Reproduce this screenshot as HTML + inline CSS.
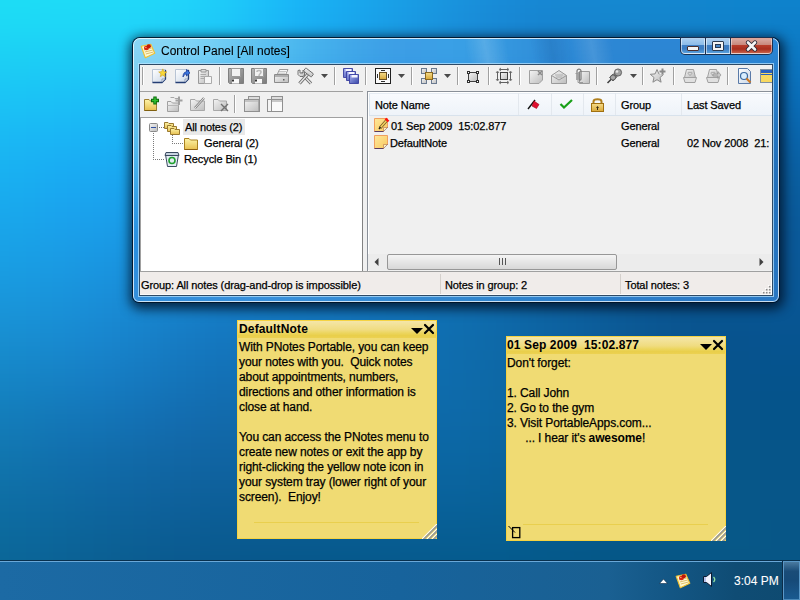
<!DOCTYPE html>
<html><head><meta charset="utf-8">
<style>
*{box-sizing:border-box;margin:0;padding:0}
html,body{width:800px;height:600px;overflow:hidden}
body{position:relative;font-family:"Liberation Sans",sans-serif;font-size:12px;color:#000;background:#1580c8}
#bg{position:absolute;left:0;top:0;width:800px;height:600px;filter:blur(16px)}
#bg i{position:absolute;width:40px;height:40px}
.a{position:absolute}
.t{position:absolute;white-space:pre;line-height:15px;-webkit-text-stroke:0.25px currentColor}
.note .t{letter-spacing:-0.1px}
svg{position:absolute;overflow:visible}
/* window */
#win{left:133px;top:38px;width:646px;height:264px;border-radius:7px 7px 6px 6px;overflow:hidden;background:#3a90d8;
 box-shadow:0 0 0 1px rgba(0,20,40,0.9), 1px 3px 12px 4px rgba(0,15,35,0.8);}
#fbg{position:absolute;left:0;top:0;width:646px;height:264px;filter:blur(6px)}
#fbg i{position:absolute;width:16px;height:16px}
#winin{left:0;top:0;right:0;bottom:0;border-radius:7px 7px 6px 6px;border:1px solid rgba(255,255,255,0.75);}
#title{left:28px;top:6px;font-size:12px;color:#000;-webkit-text-stroke:0.1px #000}
#client{left:139px;top:64px;width:634px;height:232px;background:#f0f0f0;border:1px solid #2e4a66;box-shadow:0 0 0 1px rgba(190,230,255,0.7);}
.sep{position:absolute;width:2px;border-left:1px solid #a0a0a0;border-right:1px solid #fff;height:18px}
.hdrsep{position:absolute;top:93px;width:1px;height:22px;background:#e3e8ee}
.ui{font-size:11px;letter-spacing:-0.1px}
/* notes */
.note{position:absolute;background:#f0db73;border:1px solid #f5d342}
.ncap{position:absolute;left:0;top:0;right:0;height:17px;background:linear-gradient(#f4e6a8,#f0dc80 52%,#ecd660 70%,#e9cf4a 86%,#ecd152);}
b,.bold{-webkit-text-stroke:0}
.nline{position:absolute;height:1px;background:#e9cf4e}
#task{left:0;top:560px;width:800px;height:40px;background:linear-gradient(90deg,#1c6aa4 0%,#17639c 50%,#1a6092 76%,#135684 84%,#0f4c74 92%,#0e4a70 100%);border-top:1px solid #08304e}
#task:before{content:"";position:absolute;left:0;top:0;width:800px;height:1px;background:#6aa8d8}
</style></head>
<body>
<div id="bg"><i style="left:-80px;top:-80px;background:#1ee0f5"></i><i style="left:-40px;top:-80px;background:#1ee0f5"></i><i style="left:0px;top:-80px;background:#1edff5"></i><i style="left:40px;top:-80px;background:#1fdef7"></i><i style="left:80px;top:-80px;background:#20dcf9"></i><i style="left:120px;top:-80px;background:#20dafa"></i><i style="left:160px;top:-80px;background:#20d7fb"></i><i style="left:200px;top:-80px;background:#1fcffa"></i><i style="left:240px;top:-80px;background:#1cc3fa"></i><i style="left:280px;top:-80px;background:#1ab7f7"></i><i style="left:320px;top:-80px;background:#1aaef2"></i><i style="left:360px;top:-80px;background:#1aa5eb"></i><i style="left:400px;top:-80px;background:#1a9de4"></i><i style="left:440px;top:-80px;background:#1994de"></i><i style="left:480px;top:-80px;background:#188dd9"></i><i style="left:520px;top:-80px;background:#188ad5"></i><i style="left:560px;top:-80px;background:#178ad3"></i><i style="left:600px;top:-80px;background:#168ad2"></i><i style="left:640px;top:-80px;background:#148ad1"></i><i style="left:680px;top:-80px;background:#1288d0"></i><i style="left:720px;top:-80px;background:#1087d0"></i><i style="left:760px;top:-80px;background:#0e85cf"></i><i style="left:800px;top:-80px;background:#0d84cf"></i><i style="left:840px;top:-80px;background:#0d84cf"></i><i style="left:-80px;top:-40px;background:#1ee0f5"></i><i style="left:-40px;top:-40px;background:#1ee0f5"></i><i style="left:0px;top:-40px;background:#1edff5"></i><i style="left:40px;top:-40px;background:#1fdef7"></i><i style="left:80px;top:-40px;background:#20dcf9"></i><i style="left:120px;top:-40px;background:#20dafa"></i><i style="left:160px;top:-40px;background:#20d7fb"></i><i style="left:200px;top:-40px;background:#1fcffa"></i><i style="left:240px;top:-40px;background:#1cc3fa"></i><i style="left:280px;top:-40px;background:#1ab7f7"></i><i style="left:320px;top:-40px;background:#1aaef2"></i><i style="left:360px;top:-40px;background:#1aa5eb"></i><i style="left:400px;top:-40px;background:#1a9de4"></i><i style="left:440px;top:-40px;background:#1994de"></i><i style="left:480px;top:-40px;background:#188dd9"></i><i style="left:520px;top:-40px;background:#188ad5"></i><i style="left:560px;top:-40px;background:#178ad3"></i><i style="left:600px;top:-40px;background:#168ad2"></i><i style="left:640px;top:-40px;background:#148ad1"></i><i style="left:680px;top:-40px;background:#1288d0"></i><i style="left:720px;top:-40px;background:#1087d0"></i><i style="left:760px;top:-40px;background:#0e85cf"></i><i style="left:800px;top:-40px;background:#0d84cf"></i><i style="left:840px;top:-40px;background:#0d84cf"></i><i style="left:-80px;top:0px;background:#1ddbf4"></i><i style="left:-40px;top:0px;background:#1ddbf4"></i><i style="left:0px;top:0px;background:#1ddaf5"></i><i style="left:40px;top:0px;background:#1ed8f7"></i><i style="left:80px;top:0px;background:#1fd7f8"></i><i style="left:120px;top:0px;background:#20d5f9"></i><i style="left:160px;top:0px;background:#20d1f9"></i><i style="left:200px;top:0px;background:#1ecaf9"></i><i style="left:240px;top:0px;background:#1cbef8"></i><i style="left:280px;top:0px;background:#19b2f5"></i><i style="left:320px;top:0px;background:#19a9ef"></i><i style="left:360px;top:0px;background:#19a0e8"></i><i style="left:400px;top:0px;background:#1998e1"></i><i style="left:440px;top:0px;background:#1990db"></i><i style="left:480px;top:0px;background:#1889d5"></i><i style="left:520px;top:0px;background:#1785d1"></i><i style="left:560px;top:0px;background:#1685cf"></i><i style="left:600px;top:0px;background:#1586ce"></i><i style="left:640px;top:0px;background:#1485cd"></i><i style="left:680px;top:0px;background:#1283cc"></i><i style="left:720px;top:0px;background:#0f82cb"></i><i style="left:760px;top:0px;background:#0e80ca"></i><i style="left:800px;top:0px;background:#0d80ca"></i><i style="left:840px;top:0px;background:#0d80ca"></i><i style="left:-80px;top:40px;background:#1cd0f4"></i><i style="left:-40px;top:40px;background:#1cd0f4"></i><i style="left:0px;top:40px;background:#1ccef4"></i><i style="left:40px;top:40px;background:#1dccf6"></i><i style="left:80px;top:40px;background:#1dcbf7"></i><i style="left:120px;top:40px;background:#1ec9f7"></i><i style="left:160px;top:40px;background:#1ec5f7"></i><i style="left:200px;top:40px;background:#1dbef5"></i><i style="left:240px;top:40px;background:#1bb4f3"></i><i style="left:280px;top:40px;background:#19aaef"></i><i style="left:320px;top:40px;background:#18a0e9"></i><i style="left:360px;top:40px;background:#1898e2"></i><i style="left:400px;top:40px;background:#1890db"></i><i style="left:440px;top:40px;background:#1788d4"></i><i style="left:480px;top:40px;background:#1782ce"></i><i style="left:520px;top:40px;background:#167eca"></i><i style="left:560px;top:40px;background:#157dc7"></i><i style="left:600px;top:40px;background:#147cc5"></i><i style="left:640px;top:40px;background:#127bc3"></i><i style="left:680px;top:40px;background:#107ac2"></i><i style="left:720px;top:40px;background:#0e78c1"></i><i style="left:760px;top:40px;background:#0c76c0"></i><i style="left:800px;top:40px;background:#0b75c0"></i><i style="left:840px;top:40px;background:#0b75c0"></i><i style="left:-80px;top:80px;background:#1bc4f4"></i><i style="left:-40px;top:80px;background:#1bc4f4"></i><i style="left:0px;top:80px;background:#1bc3f5"></i><i style="left:40px;top:80px;background:#1bc0f6"></i><i style="left:80px;top:80px;background:#1cbef6"></i><i style="left:120px;top:80px;background:#1cbcf5"></i><i style="left:160px;top:80px;background:#1cb8f3"></i><i style="left:200px;top:80px;background:#1bb2f1"></i><i style="left:240px;top:80px;background:#1aaaed"></i><i style="left:280px;top:80px;background:#18a1e9"></i><i style="left:320px;top:80px;background:#1798e3"></i><i style="left:360px;top:80px;background:#1790dc"></i><i style="left:400px;top:80px;background:#1789d5"></i><i style="left:440px;top:80px;background:#1682ce"></i><i style="left:480px;top:80px;background:#157cc8"></i><i style="left:520px;top:80px;background:#1478c3"></i><i style="left:560px;top:80px;background:#1376bf"></i><i style="left:600px;top:80px;background:#1274bc"></i><i style="left:640px;top:80px;background:#1172b9"></i><i style="left:680px;top:80px;background:#0f70b7"></i><i style="left:720px;top:80px;background:#0c6eb6"></i><i style="left:760px;top:80px;background:#0a6cb6"></i><i style="left:800px;top:80px;background:#096bb5"></i><i style="left:840px;top:80px;background:#096bb5"></i><i style="left:-80px;top:120px;background:#1ab9f2"></i><i style="left:-40px;top:120px;background:#1ab9f2"></i><i style="left:0px;top:120px;background:#1ab7f4"></i><i style="left:40px;top:120px;background:#1ab4f5"></i><i style="left:80px;top:120px;background:#1ab2f5"></i><i style="left:120px;top:120px;background:#1baff3"></i><i style="left:160px;top:120px;background:#1aacef"></i><i style="left:200px;top:120px;background:#1aa6eb"></i><i style="left:240px;top:120px;background:#199fe7"></i><i style="left:280px;top:120px;background:#1798e2"></i><i style="left:320px;top:120px;background:#1791dc"></i><i style="left:360px;top:120px;background:#1689d5"></i><i style="left:400px;top:120px;background:#1583ce"></i><i style="left:440px;top:120px;background:#157cc8"></i><i style="left:480px;top:120px;background:#1477c1"></i><i style="left:520px;top:120px;background:#1372bc"></i><i style="left:560px;top:120px;background:#126fb7"></i><i style="left:600px;top:120px;background:#116db3"></i><i style="left:640px;top:120px;background:#0f6ab0"></i><i style="left:680px;top:120px;background:#0e68ad"></i><i style="left:720px;top:120px;background:#0c66ab"></i><i style="left:760px;top:120px;background:#0a64aa"></i><i style="left:800px;top:120px;background:#0964aa"></i><i style="left:840px;top:120px;background:#0964aa"></i><i style="left:-80px;top:160px;background:#19b0ef"></i><i style="left:-40px;top:160px;background:#19b0ef"></i><i style="left:0px;top:160px;background:#19aef1"></i><i style="left:40px;top:160px;background:#19aaf2"></i><i style="left:80px;top:160px;background:#1aa7f1"></i><i style="left:120px;top:160px;background:#1aa4ee"></i><i style="left:160px;top:160px;background:#19a0e9"></i><i style="left:200px;top:160px;background:#199be5"></i><i style="left:240px;top:160px;background:#1896e0"></i><i style="left:280px;top:160px;background:#1790da"></i><i style="left:320px;top:160px;background:#1689d5"></i><i style="left:360px;top:160px;background:#1583ce"></i><i style="left:400px;top:160px;background:#147dc8"></i><i style="left:440px;top:160px;background:#1478c1"></i><i style="left:480px;top:160px;background:#1372bb"></i><i style="left:520px;top:160px;background:#126eb5"></i><i style="left:560px;top:160px;background:#116ab0"></i><i style="left:600px;top:160px;background:#1066ab"></i><i style="left:640px;top:160px;background:#0e64a7"></i><i style="left:680px;top:160px;background:#0d61a4"></i><i style="left:720px;top:160px;background:#0b5fa1"></i><i style="left:760px;top:160px;background:#0a5e9f"></i><i style="left:800px;top:160px;background:#095e9f"></i><i style="left:840px;top:160px;background:#095e9f"></i><i style="left:-80px;top:200px;background:#19a7ea"></i><i style="left:-40px;top:200px;background:#19a7ea"></i><i style="left:0px;top:200px;background:#19a6eb"></i><i style="left:40px;top:200px;background:#1aa2ec"></i><i style="left:80px;top:200px;background:#1a9feb"></i><i style="left:120px;top:200px;background:#199be7"></i><i style="left:160px;top:200px;background:#1896e2"></i><i style="left:200px;top:200px;background:#1892dd"></i><i style="left:240px;top:200px;background:#178dd8"></i><i style="left:280px;top:200px;background:#1688d2"></i><i style="left:320px;top:200px;background:#1583cd"></i><i style="left:360px;top:200px;background:#147ec8"></i><i style="left:400px;top:200px;background:#1379c2"></i><i style="left:440px;top:200px;background:#1274bc"></i><i style="left:480px;top:200px;background:#126fb5"></i><i style="left:520px;top:200px;background:#116aaf"></i><i style="left:560px;top:200px;background:#1066a9"></i><i style="left:600px;top:200px;background:#0e62a4"></i><i style="left:640px;top:200px;background:#0d5e9f"></i><i style="left:680px;top:200px;background:#0c5c9c"></i><i style="left:720px;top:200px;background:#0b5b9a"></i><i style="left:760px;top:200px;background:#0a5a9a"></i><i style="left:800px;top:200px;background:#0a5a9a"></i><i style="left:840px;top:200px;background:#0a5a9a"></i><i style="left:-80px;top:240px;background:#19a0e3"></i><i style="left:-40px;top:240px;background:#19a0e3"></i><i style="left:0px;top:240px;background:#199ee4"></i><i style="left:40px;top:240px;background:#1a9be4"></i><i style="left:80px;top:240px;background:#1997e2"></i><i style="left:120px;top:240px;background:#1992de"></i><i style="left:160px;top:240px;background:#188dd8"></i><i style="left:200px;top:240px;background:#1788d3"></i><i style="left:240px;top:240px;background:#1684cf"></i><i style="left:280px;top:240px;background:#1580ca"></i><i style="left:320px;top:240px;background:#147dc6"></i><i style="left:360px;top:240px;background:#1379c1"></i><i style="left:400px;top:240px;background:#1275bc"></i><i style="left:440px;top:240px;background:#1171b6"></i><i style="left:480px;top:240px;background:#106cb0"></i><i style="left:520px;top:240px;background:#0f67aa"></i><i style="left:560px;top:240px;background:#0e62a3"></i><i style="left:600px;top:240px;background:#0d5e9d"></i><i style="left:640px;top:240px;background:#0c5a99"></i><i style="left:680px;top:240px;background:#0b5896"></i><i style="left:720px;top:240px;background:#0b5796"></i><i style="left:760px;top:240px;background:#0a5897"></i><i style="left:800px;top:240px;background:#0a5898"></i><i style="left:840px;top:240px;background:#0a5898"></i><i style="left:-80px;top:280px;background:#1997da"></i><i style="left:-40px;top:280px;background:#1997da"></i><i style="left:0px;top:280px;background:#1996db"></i><i style="left:40px;top:280px;background:#1993da"></i><i style="left:80px;top:280px;background:#198ed8"></i><i style="left:120px;top:280px;background:#1889d3"></i><i style="left:160px;top:280px;background:#1784ce"></i><i style="left:200px;top:280px;background:#167fc9"></i><i style="left:240px;top:280px;background:#157cc5"></i><i style="left:280px;top:280px;background:#147ac2"></i><i style="left:320px;top:280px;background:#1377bf"></i><i style="left:360px;top:280px;background:#1275bb"></i><i style="left:400px;top:280px;background:#1172b7"></i><i style="left:440px;top:280px;background:#106fb2"></i><i style="left:480px;top:280px;background:#0f6aac"></i><i style="left:520px;top:280px;background:#0e65a5"></i><i style="left:560px;top:280px;background:#0d609f"></i><i style="left:600px;top:280px;background:#0c5b99"></i><i style="left:640px;top:280px;background:#0b5794"></i><i style="left:680px;top:280px;background:#0a5591"></i><i style="left:720px;top:280px;background:#095592"></i><i style="left:760px;top:280px;background:#095694"></i><i style="left:800px;top:280px;background:#085695"></i><i style="left:840px;top:280px;background:#085695"></i><i style="left:-80px;top:320px;background:#178fd0"></i><i style="left:-40px;top:320px;background:#178fd0"></i><i style="left:0px;top:320px;background:#188dd0"></i><i style="left:40px;top:320px;background:#188ad0"></i><i style="left:80px;top:320px;background:#1886ce"></i><i style="left:120px;top:320px;background:#1781c9"></i><i style="left:160px;top:320px;background:#167bc3"></i><i style="left:200px;top:320px;background:#1477bf"></i><i style="left:240px;top:320px;background:#1375bc"></i><i style="left:280px;top:320px;background:#1273b9"></i><i style="left:320px;top:320px;background:#1272b7"></i><i style="left:360px;top:320px;background:#1171b5"></i><i style="left:400px;top:320px;background:#106fb2"></i><i style="left:440px;top:320px;background:#0f6dae"></i><i style="left:480px;top:320px;background:#0e69a8"></i><i style="left:520px;top:320px;background:#0d64a2"></i><i style="left:560px;top:320px;background:#0c5f9c"></i><i style="left:600px;top:320px;background:#0b5a95"></i><i style="left:640px;top:320px;background:#0a5690"></i><i style="left:680px;top:320px;background:#08548e"></i><i style="left:720px;top:320px;background:#07538e"></i><i style="left:760px;top:320px;background:#065490"></i><i style="left:800px;top:320px;background:#065490"></i><i style="left:840px;top:320px;background:#065490"></i><i style="left:-80px;top:360px;background:#1586c5"></i><i style="left:-40px;top:360px;background:#1586c5"></i><i style="left:0px;top:360px;background:#1584c5"></i><i style="left:40px;top:360px;background:#1681c4"></i><i style="left:80px;top:360px;background:#167dc3"></i><i style="left:120px;top:360px;background:#1579bf"></i><i style="left:160px;top:360px;background:#1474b9"></i><i style="left:200px;top:360px;background:#1370b5"></i><i style="left:240px;top:360px;background:#126fb3"></i><i style="left:280px;top:360px;background:#116eb1"></i><i style="left:320px;top:360px;background:#106eb0"></i><i style="left:360px;top:360px;background:#0f6daf"></i><i style="left:400px;top:360px;background:#0f6dae"></i><i style="left:440px;top:360px;background:#0e6bab"></i><i style="left:480px;top:360px;background:#0d68a6"></i><i style="left:520px;top:360px;background:#0c64a0"></i><i style="left:560px;top:360px;background:#0b5f99"></i><i style="left:600px;top:360px;background:#095a93"></i><i style="left:640px;top:360px;background:#08568f"></i><i style="left:680px;top:360px;background:#07548c"></i><i style="left:720px;top:360px;background:#06538c"></i><i style="left:760px;top:360px;background:#05538c"></i><i style="left:800px;top:360px;background:#05538d"></i><i style="left:840px;top:360px;background:#05538d"></i><i style="left:-80px;top:400px;background:#137dba"></i><i style="left:-40px;top:400px;background:#137dba"></i><i style="left:0px;top:400px;background:#137bb9"></i><i style="left:40px;top:400px;background:#1377b7"></i><i style="left:80px;top:400px;background:#1374b6"></i><i style="left:120px;top:400px;background:#1370b3"></i><i style="left:160px;top:400px;background:#136caf"></i><i style="left:200px;top:400px;background:#126aab"></i><i style="left:240px;top:400px;background:#1069aa"></i><i style="left:280px;top:400px;background:#0f68a9"></i><i style="left:320px;top:400px;background:#0e69a9"></i><i style="left:360px;top:400px;background:#0e6aa9"></i><i style="left:400px;top:400px;background:#0d6aa9"></i><i style="left:440px;top:400px;background:#0d69a8"></i><i style="left:480px;top:400px;background:#0c67a3"></i><i style="left:520px;top:400px;background:#0a639d"></i><i style="left:560px;top:400px;background:#095e97"></i><i style="left:600px;top:400px;background:#085a92"></i><i style="left:640px;top:400px;background:#07578d"></i><i style="left:680px;top:400px;background:#07558b"></i><i style="left:720px;top:400px;background:#06548a"></i><i style="left:760px;top:400px;background:#05548a"></i><i style="left:800px;top:400px;background:#05538b"></i><i style="left:840px;top:400px;background:#05538b"></i><i style="left:-80px;top:440px;background:#1176af"></i><i style="left:-40px;top:440px;background:#1176af"></i><i style="left:0px;top:440px;background:#1174ae"></i><i style="left:40px;top:440px;background:#116fac"></i><i style="left:80px;top:440px;background:#116caa"></i><i style="left:120px;top:440px;background:#1169a7"></i><i style="left:160px;top:440px;background:#1166a4"></i><i style="left:200px;top:440px;background:#1064a2"></i><i style="left:240px;top:440px;background:#0e63a1"></i><i style="left:280px;top:440px;background:#0d63a0"></i><i style="left:320px;top:440px;background:#0c64a1"></i><i style="left:360px;top:440px;background:#0c65a2"></i><i style="left:400px;top:440px;background:#0b66a3"></i><i style="left:440px;top:440px;background:#0b66a2"></i><i style="left:480px;top:440px;background:#0a649f"></i><i style="left:520px;top:440px;background:#096199"></i><i style="left:560px;top:440px;background:#085d94"></i><i style="left:600px;top:440px;background:#075a8f"></i><i style="left:640px;top:440px;background:#07588c"></i><i style="left:680px;top:440px;background:#06578a"></i><i style="left:720px;top:440px;background:#065689"></i><i style="left:760px;top:440px;background:#065589"></i><i style="left:800px;top:440px;background:#055489"></i><i style="left:840px;top:440px;background:#055489"></i><i style="left:-80px;top:480px;background:#0e6fa5"></i><i style="left:-40px;top:480px;background:#0e6fa5"></i><i style="left:0px;top:480px;background:#0e6da4"></i><i style="left:40px;top:480px;background:#0e6aa2"></i><i style="left:80px;top:480px;background:#0e66a0"></i><i style="left:120px;top:480px;background:#0e639e"></i><i style="left:160px;top:480px;background:#0e619b"></i><i style="left:200px;top:480px;background:#0d5f99"></i><i style="left:240px;top:480px;background:#0c5e98"></i><i style="left:280px;top:480px;background:#0b5f98"></i><i style="left:320px;top:480px;background:#0a6098"></i><i style="left:360px;top:480px;background:#09619a"></i><i style="left:400px;top:480px;background:#09629b"></i><i style="left:440px;top:480px;background:#09629b"></i><i style="left:480px;top:480px;background:#086198"></i><i style="left:520px;top:480px;background:#075e94"></i><i style="left:560px;top:480px;background:#065c90"></i><i style="left:600px;top:480px;background:#06598c"></i><i style="left:640px;top:480px;background:#06588a"></i><i style="left:680px;top:480px;background:#075889"></i><i style="left:720px;top:480px;background:#075789"></i><i style="left:760px;top:480px;background:#075689"></i><i style="left:800px;top:480px;background:#065588"></i><i style="left:840px;top:480px;background:#065588"></i><i style="left:-80px;top:520px;background:#0c6a9d"></i><i style="left:-40px;top:520px;background:#0c6a9d"></i><i style="left:0px;top:520px;background:#0c689c"></i><i style="left:40px;top:520px;background:#0c659a"></i><i style="left:80px;top:520px;background:#0c6297"></i><i style="left:120px;top:520px;background:#0c5f95"></i><i style="left:160px;top:520px;background:#0b5c93"></i><i style="left:200px;top:520px;background:#0a5b91"></i><i style="left:240px;top:520px;background:#095a90"></i><i style="left:280px;top:520px;background:#085a8f"></i><i style="left:320px;top:520px;background:#075b90"></i><i style="left:360px;top:520px;background:#075c91"></i><i style="left:400px;top:520px;background:#075d92"></i><i style="left:440px;top:520px;background:#065d92"></i><i style="left:480px;top:520px;background:#065d91"></i><i style="left:520px;top:520px;background:#055b8e"></i><i style="left:560px;top:520px;background:#05598b"></i><i style="left:600px;top:520px;background:#055889"></i><i style="left:640px;top:520px;background:#065888"></i><i style="left:680px;top:520px;background:#075888"></i><i style="left:720px;top:520px;background:#075888"></i><i style="left:760px;top:520px;background:#075687"></i><i style="left:800px;top:520px;background:#075687"></i><i style="left:840px;top:520px;background:#075687"></i><i style="left:-80px;top:560px;background:#0a6595"></i><i style="left:-40px;top:560px;background:#0a6595"></i><i style="left:0px;top:560px;background:#0a6394"></i><i style="left:40px;top:560px;background:#0a6092"></i><i style="left:80px;top:560px;background:#0a5d8f"></i><i style="left:120px;top:560px;background:#095b8d"></i><i style="left:160px;top:560px;background:#09588b"></i><i style="left:200px;top:560px;background:#08578a"></i><i style="left:240px;top:560px;background:#075688"></i><i style="left:280px;top:560px;background:#065688"></i><i style="left:320px;top:560px;background:#055788"></i><i style="left:360px;top:560px;background:#055889"></i><i style="left:400px;top:560px;background:#04588a"></i><i style="left:440px;top:560px;background:#04598a"></i><i style="left:480px;top:560px;background:#04588a"></i><i style="left:520px;top:560px;background:#045888"></i><i style="left:560px;top:560px;background:#045786"></i><i style="left:600px;top:560px;background:#045685"></i><i style="left:640px;top:560px;background:#055684"></i><i style="left:680px;top:560px;background:#065685"></i><i style="left:720px;top:560px;background:#075685"></i><i style="left:760px;top:560px;background:#075585"></i><i style="left:800px;top:560px;background:#075484"></i><i style="left:840px;top:560px;background:#075484"></i><i style="left:-80px;top:600px;background:#096291"></i><i style="left:-40px;top:600px;background:#096291"></i><i style="left:0px;top:600px;background:#096190"></i><i style="left:40px;top:600px;background:#095e8e"></i><i style="left:80px;top:600px;background:#095b8c"></i><i style="left:120px;top:600px;background:#085989"></i><i style="left:160px;top:600px;background:#075688"></i><i style="left:200px;top:600px;background:#075586"></i><i style="left:240px;top:600px;background:#065485"></i><i style="left:280px;top:600px;background:#055484"></i><i style="left:320px;top:600px;background:#045585"></i><i style="left:360px;top:600px;background:#045586"></i><i style="left:400px;top:600px;background:#045686"></i><i style="left:440px;top:600px;background:#035787"></i><i style="left:480px;top:600px;background:#035786"></i><i style="left:520px;top:600px;background:#035685"></i><i style="left:560px;top:600px;background:#035584"></i><i style="left:600px;top:600px;background:#045583"></i><i style="left:640px;top:600px;background:#055582"></i><i style="left:680px;top:600px;background:#065583"></i><i style="left:720px;top:600px;background:#075583"></i><i style="left:760px;top:600px;background:#075483"></i><i style="left:800px;top:600px;background:#075383"></i><i style="left:840px;top:600px;background:#075383"></i><i style="left:-80px;top:640px;background:#096291"></i><i style="left:-40px;top:640px;background:#096291"></i><i style="left:0px;top:640px;background:#096190"></i><i style="left:40px;top:640px;background:#095e8e"></i><i style="left:80px;top:640px;background:#095b8c"></i><i style="left:120px;top:640px;background:#085989"></i><i style="left:160px;top:640px;background:#075688"></i><i style="left:200px;top:640px;background:#075586"></i><i style="left:240px;top:640px;background:#065485"></i><i style="left:280px;top:640px;background:#055484"></i><i style="left:320px;top:640px;background:#045585"></i><i style="left:360px;top:640px;background:#045586"></i><i style="left:400px;top:640px;background:#045686"></i><i style="left:440px;top:640px;background:#035787"></i><i style="left:480px;top:640px;background:#035786"></i><i style="left:520px;top:640px;background:#035685"></i><i style="left:560px;top:640px;background:#035584"></i><i style="left:600px;top:640px;background:#045583"></i><i style="left:640px;top:640px;background:#055582"></i><i style="left:680px;top:640px;background:#065583"></i><i style="left:720px;top:640px;background:#075583"></i><i style="left:760px;top:640px;background:#075483"></i><i style="left:800px;top:640px;background:#075383"></i><i style="left:840px;top:640px;background:#075383"></i></div>

<!-- ============ WINDOW ============ -->
<div id="win" class="a">
<div id="fbg"><i style="left:-16px;top:-16px;background:#8dd7f4"></i><i style="left:0px;top:-16px;background:#8cd7f4"></i><i style="left:16px;top:-16px;background:#89d7f5"></i><i style="left:32px;top:-16px;background:#85d6f6"></i><i style="left:48px;top:-16px;background:#80d5f6"></i><i style="left:64px;top:-16px;background:#79d2f6"></i><i style="left:80px;top:-16px;background:#72cef5"></i><i style="left:96px;top:-16px;background:#69caf4"></i><i style="left:112px;top:-16px;background:#61c6f3"></i><i style="left:128px;top:-16px;background:#5ac1f1"></i><i style="left:144px;top:-16px;background:#53bcf0"></i><i style="left:160px;top:-16px;background:#4db7ee"></i><i style="left:176px;top:-16px;background:#48b3ed"></i><i style="left:192px;top:-16px;background:#45aeeb"></i><i style="left:208px;top:-16px;background:#43aaea"></i><i style="left:224px;top:-16px;background:#41a6e9"></i><i style="left:240px;top:-16px;background:#3fa3e8"></i><i style="left:256px;top:-16px;background:#3ea0e7"></i><i style="left:272px;top:-16px;background:#3da0e7"></i><i style="left:288px;top:-16px;background:#3ca0e7"></i><i style="left:304px;top:-16px;background:#3ba1e7"></i><i style="left:320px;top:-16px;background:#3aa0e6"></i><i style="left:336px;top:-16px;background:#389ee4"></i><i style="left:352px;top:-16px;background:#379be2"></i><i style="left:368px;top:-16px;background:#3597df"></i><i style="left:384px;top:-16px;background:#3394dd"></i><i style="left:400px;top:-16px;background:#3190db"></i><i style="left:416px;top:-16px;background:#308dd9"></i><i style="left:432px;top:-16px;background:#2f8bd7"></i><i style="left:448px;top:-16px;background:#2e89d6"></i><i style="left:464px;top:-16px;background:#2d88d6"></i><i style="left:480px;top:-16px;background:#2d88d5"></i><i style="left:496px;top:-16px;background:#2d88d5"></i><i style="left:512px;top:-16px;background:#2d87d5"></i><i style="left:528px;top:-16px;background:#2c87d6"></i><i style="left:544px;top:-16px;background:#2c87d6"></i><i style="left:560px;top:-16px;background:#2c87d6"></i><i style="left:576px;top:-16px;background:#2c87d6"></i><i style="left:592px;top:-16px;background:#2b86d6"></i><i style="left:608px;top:-16px;background:#2b86d6"></i><i style="left:624px;top:-16px;background:#2a86d6"></i><i style="left:640px;top:-16px;background:#2a85d6"></i><i style="left:656px;top:-16px;background:#2a85d6"></i><i style="left:-16px;top:0px;background:#8ad5f3"></i><i style="left:0px;top:0px;background:#89d5f4"></i><i style="left:16px;top:0px;background:#86d5f5"></i><i style="left:32px;top:0px;background:#83d5f5"></i><i style="left:48px;top:0px;background:#7ed3f6"></i><i style="left:64px;top:0px;background:#77d0f5"></i><i style="left:80px;top:0px;background:#6fcdf4"></i><i style="left:96px;top:0px;background:#67c8f3"></i><i style="left:112px;top:0px;background:#5fc4f2"></i><i style="left:128px;top:0px;background:#57bff1"></i><i style="left:144px;top:0px;background:#50bbef"></i><i style="left:160px;top:0px;background:#4ab6ee"></i><i style="left:176px;top:0px;background:#46b1ec"></i><i style="left:192px;top:0px;background:#43adeb"></i><i style="left:208px;top:0px;background:#41a8e9"></i><i style="left:224px;top:0px;background:#3fa5e8"></i><i style="left:240px;top:0px;background:#3ea1e7"></i><i style="left:256px;top:0px;background:#3d9fe6"></i><i style="left:272px;top:0px;background:#3c9ee6"></i><i style="left:288px;top:0px;background:#3b9fe6"></i><i style="left:304px;top:0px;background:#3aa0e6"></i><i style="left:320px;top:0px;background:#399fe5"></i><i style="left:336px;top:0px;background:#379de3"></i><i style="left:352px;top:0px;background:#369ae1"></i><i style="left:368px;top:0px;background:#3496de"></i><i style="left:384px;top:0px;background:#3293dc"></i><i style="left:400px;top:0px;background:#308fda"></i><i style="left:416px;top:0px;background:#2f8cd7"></i><i style="left:432px;top:0px;background:#2e8ad6"></i><i style="left:448px;top:0px;background:#2d88d5"></i><i style="left:464px;top:0px;background:#2d87d4"></i><i style="left:480px;top:0px;background:#2c87d4"></i><i style="left:496px;top:0px;background:#2c86d4"></i><i style="left:512px;top:0px;background:#2c86d4"></i><i style="left:528px;top:0px;background:#2c86d4"></i><i style="left:544px;top:0px;background:#2c86d4"></i><i style="left:560px;top:0px;background:#2b86d4"></i><i style="left:576px;top:0px;background:#2b85d4"></i><i style="left:592px;top:0px;background:#2b85d4"></i><i style="left:608px;top:0px;background:#2a85d4"></i><i style="left:624px;top:0px;background:#2a84d4"></i><i style="left:640px;top:0px;background:#2a84d4"></i><i style="left:656px;top:0px;background:#2a84d4"></i><i style="left:-16px;top:16px;background:#83d2f3"></i><i style="left:0px;top:16px;background:#82d2f3"></i><i style="left:16px;top:16px;background:#80d2f4"></i><i style="left:32px;top:16px;background:#7cd1f5"></i><i style="left:48px;top:16px;background:#77cff5"></i><i style="left:64px;top:16px;background:#71cdf4"></i><i style="left:80px;top:16px;background:#69c9f3"></i><i style="left:96px;top:16px;background:#62c5f2"></i><i style="left:112px;top:16px;background:#5ac1f1"></i><i style="left:128px;top:16px;background:#53bcf0"></i><i style="left:144px;top:16px;background:#4cb8ee"></i><i style="left:160px;top:16px;background:#47b3ed"></i><i style="left:176px;top:16px;background:#43aeeb"></i><i style="left:192px;top:16px;background:#40aaea"></i><i style="left:208px;top:16px;background:#3ea6e8"></i><i style="left:224px;top:16px;background:#3ca2e7"></i><i style="left:240px;top:16px;background:#3b9fe6"></i><i style="left:256px;top:16px;background:#3a9de5"></i><i style="left:272px;top:16px;background:#399ce4"></i><i style="left:288px;top:16px;background:#399de4"></i><i style="left:304px;top:16px;background:#389de4"></i><i style="left:320px;top:16px;background:#379de3"></i><i style="left:336px;top:16px;background:#369ae1"></i><i style="left:352px;top:16px;background:#3498df"></i><i style="left:368px;top:16px;background:#3294dd"></i><i style="left:384px;top:16px;background:#3191da"></i><i style="left:400px;top:16px;background:#2f8dd8"></i><i style="left:416px;top:16px;background:#2e8ad6"></i><i style="left:432px;top:16px;background:#2c88d4"></i><i style="left:448px;top:16px;background:#2c86d3"></i><i style="left:464px;top:16px;background:#2b85d2"></i><i style="left:480px;top:16px;background:#2b85d2"></i><i style="left:496px;top:16px;background:#2b84d2"></i><i style="left:512px;top:16px;background:#2b84d1"></i><i style="left:528px;top:16px;background:#2b84d1"></i><i style="left:544px;top:16px;background:#2b84d1"></i><i style="left:560px;top:16px;background:#2a83d1"></i><i style="left:576px;top:16px;background:#2a83d1"></i><i style="left:592px;top:16px;background:#2a83d1"></i><i style="left:608px;top:16px;background:#2a82d1"></i><i style="left:624px;top:16px;background:#2982d0"></i><i style="left:640px;top:16px;background:#2982d0"></i><i style="left:656px;top:16px;background:#2982d0"></i><i style="left:-16px;top:32px;background:#7ccef2"></i><i style="left:0px;top:32px;background:#7bcef3"></i><i style="left:16px;top:32px;background:#78cdf3"></i><i style="left:624px;top:32px;background:#2980cc"></i><i style="left:640px;top:32px;background:#287fcc"></i><i style="left:656px;top:32px;background:#287fcc"></i><i style="left:-16px;top:48px;background:#73c9f2"></i><i style="left:0px;top:48px;background:#72c9f2"></i><i style="left:16px;top:48px;background:#70c9f2"></i><i style="left:624px;top:48px;background:#287dc7"></i><i style="left:640px;top:48px;background:#287cc7"></i><i style="left:656px;top:48px;background:#287cc7"></i><i style="left:-16px;top:64px;background:#6ac5f1"></i><i style="left:0px;top:64px;background:#69c5f1"></i><i style="left:16px;top:64px;background:#67c4f1"></i><i style="left:624px;top:64px;background:#277ac3"></i><i style="left:640px;top:64px;background:#2779c3"></i><i style="left:656px;top:64px;background:#2779c3"></i><i style="left:-16px;top:80px;background:#61c0f0"></i><i style="left:0px;top:80px;background:#60c0f0"></i><i style="left:16px;top:80px;background:#5dbff0"></i><i style="left:624px;top:80px;background:#2676c0"></i><i style="left:640px;top:80px;background:#2576bf"></i><i style="left:656px;top:80px;background:#2576bf"></i><i style="left:-16px;top:96px;background:#58bbef"></i><i style="left:0px;top:96px;background:#57bbef"></i><i style="left:16px;top:96px;background:#54baef"></i><i style="left:624px;top:96px;background:#2474bd"></i><i style="left:640px;top:96px;background:#2473bd"></i><i style="left:656px;top:96px;background:#2473bd"></i><i style="left:-16px;top:112px;background:#4eb5ed"></i><i style="left:0px;top:112px;background:#4db5ed"></i><i style="left:16px;top:112px;background:#4bb3ed"></i><i style="left:624px;top:112px;background:#2472bc"></i><i style="left:640px;top:112px;background:#2371bb"></i><i style="left:656px;top:112px;background:#2371bb"></i><i style="left:-16px;top:128px;background:#45adea"></i><i style="left:0px;top:128px;background:#44adea"></i><i style="left:16px;top:128px;background:#42acea"></i><i style="left:624px;top:128px;background:#2471bb"></i><i style="left:640px;top:128px;background:#2370ba"></i><i style="left:656px;top:128px;background:#2370ba"></i><i style="left:-16px;top:144px;background:#3ca5e8"></i><i style="left:0px;top:144px;background:#3ba5e8"></i><i style="left:16px;top:144px;background:#3aa4e8"></i><i style="left:624px;top:144px;background:#2471bb"></i><i style="left:640px;top:144px;background:#2370ba"></i><i style="left:656px;top:144px;background:#2370ba"></i><i style="left:-16px;top:160px;background:#349de5"></i><i style="left:0px;top:160px;background:#349de5"></i><i style="left:16px;top:160px;background:#339de5"></i><i style="left:624px;top:160px;background:#2472bc"></i><i style="left:640px;top:160px;background:#2471bb"></i><i style="left:656px;top:160px;background:#2471bb"></i><i style="left:-16px;top:176px;background:#2e96e2"></i><i style="left:0px;top:176px;background:#2d96e2"></i><i style="left:16px;top:176px;background:#2e96e3"></i><i style="left:624px;top:176px;background:#2573bd"></i><i style="left:640px;top:176px;background:#2472bc"></i><i style="left:656px;top:176px;background:#2472bc"></i><i style="left:-16px;top:192px;background:#2a91e0"></i><i style="left:0px;top:192px;background:#2a90e0"></i><i style="left:16px;top:192px;background:#2b91e0"></i><i style="left:624px;top:192px;background:#2674be"></i><i style="left:640px;top:192px;background:#2573bd"></i><i style="left:656px;top:192px;background:#2573bd"></i><i style="left:-16px;top:208px;background:#2b8ede"></i><i style="left:0px;top:208px;background:#2a8ede"></i><i style="left:16px;top:208px;background:#2b8fdf"></i><i style="left:624px;top:208px;background:#2775bf"></i><i style="left:640px;top:208px;background:#2674bf"></i><i style="left:656px;top:208px;background:#2674bf"></i><i style="left:-16px;top:224px;background:#2e8fdd"></i><i style="left:0px;top:224px;background:#2e8edd"></i><i style="left:16px;top:224px;background:#2e8edd"></i><i style="left:624px;top:224px;background:#2876c1"></i><i style="left:640px;top:224px;background:#2775c0"></i><i style="left:656px;top:224px;background:#2775c0"></i><i style="left:-16px;top:240px;background:#338fdc"></i><i style="left:0px;top:240px;background:#328fdc"></i><i style="left:16px;top:240px;background:#328fdc"></i><i style="left:32px;top:240px;background:#328fdc"></i><i style="left:48px;top:240px;background:#328fdd"></i><i style="left:64px;top:240px;background:#338fdd"></i><i style="left:80px;top:240px;background:#3590dd"></i><i style="left:96px;top:240px;background:#3690dd"></i><i style="left:112px;top:240px;background:#3791dc"></i><i style="left:128px;top:240px;background:#3790dc"></i><i style="left:144px;top:240px;background:#3790db"></i><i style="left:160px;top:240px;background:#3790da"></i><i style="left:176px;top:240px;background:#368fd9"></i><i style="left:192px;top:240px;background:#368ed8"></i><i style="left:208px;top:240px;background:#368dd7"></i><i style="left:224px;top:240px;background:#358dd6"></i><i style="left:240px;top:240px;background:#358cd5"></i><i style="left:256px;top:240px;background:#348bd3"></i><i style="left:272px;top:240px;background:#348ad2"></i><i style="left:288px;top:240px;background:#3389d1"></i><i style="left:304px;top:240px;background:#3388d0"></i><i style="left:320px;top:240px;background:#3287cf"></i><i style="left:336px;top:240px;background:#3286cf"></i><i style="left:352px;top:240px;background:#3185ce"></i><i style="left:368px;top:240px;background:#3085ce"></i><i style="left:384px;top:240px;background:#3084ce"></i><i style="left:400px;top:240px;background:#2f83cd"></i><i style="left:416px;top:240px;background:#2e82cd"></i><i style="left:432px;top:240px;background:#2e81cc"></i><i style="left:448px;top:240px;background:#2d80cc"></i><i style="left:464px;top:240px;background:#2d7fcb"></i><i style="left:480px;top:240px;background:#2c7eca"></i><i style="left:496px;top:240px;background:#2c7dc9"></i><i style="left:512px;top:240px;background:#2c7cc8"></i><i style="left:528px;top:240px;background:#2b7cc7"></i><i style="left:544px;top:240px;background:#2b7bc6"></i><i style="left:560px;top:240px;background:#2a7ac6"></i><i style="left:576px;top:240px;background:#2a79c5"></i><i style="left:592px;top:240px;background:#2a79c4"></i><i style="left:608px;top:240px;background:#2978c3"></i><i style="left:624px;top:240px;background:#2977c3"></i><i style="left:640px;top:240px;background:#2876c2"></i><i style="left:656px;top:240px;background:#2876c2"></i><i style="left:-16px;top:256px;background:#368fdb"></i><i style="left:0px;top:256px;background:#358fdb"></i><i style="left:16px;top:256px;background:#358fdb"></i><i style="left:32px;top:256px;background:#348edb"></i><i style="left:48px;top:256px;background:#358edb"></i><i style="left:64px;top:256px;background:#358fdb"></i><i style="left:80px;top:256px;background:#368fdb"></i><i style="left:96px;top:256px;background:#378fdb"></i><i style="left:112px;top:256px;background:#388fdb"></i><i style="left:128px;top:256px;background:#388fdb"></i><i style="left:144px;top:256px;background:#388fda"></i><i style="left:160px;top:256px;background:#388ed9"></i><i style="left:176px;top:256px;background:#378ed8"></i><i style="left:192px;top:256px;background:#378dd7"></i><i style="left:208px;top:256px;background:#368cd6"></i><i style="left:224px;top:256px;background:#368bd5"></i><i style="left:240px;top:256px;background:#368bd4"></i><i style="left:256px;top:256px;background:#358ad2"></i><i style="left:272px;top:256px;background:#3589d1"></i><i style="left:288px;top:256px;background:#3488d0"></i><i style="left:304px;top:256px;background:#3487cf"></i><i style="left:320px;top:256px;background:#3387cf"></i><i style="left:336px;top:256px;background:#3286ce"></i><i style="left:352px;top:256px;background:#3285ce"></i><i style="left:368px;top:256px;background:#3184ce"></i><i style="left:384px;top:256px;background:#3083cd"></i><i style="left:400px;top:256px;background:#3082cd"></i><i style="left:416px;top:256px;background:#2f82cd"></i><i style="left:432px;top:256px;background:#2f81cc"></i><i style="left:448px;top:256px;background:#2e80cc"></i><i style="left:464px;top:256px;background:#2d7fcb"></i><i style="left:480px;top:256px;background:#2d7ecb"></i><i style="left:496px;top:256px;background:#2d7dca"></i><i style="left:512px;top:256px;background:#2c7dc9"></i><i style="left:528px;top:256px;background:#2c7cc8"></i><i style="left:544px;top:256px;background:#2c7bc7"></i><i style="left:560px;top:256px;background:#2b7ac6"></i><i style="left:576px;top:256px;background:#2b7ac6"></i><i style="left:592px;top:256px;background:#2b79c5"></i><i style="left:608px;top:256px;background:#2a79c5"></i><i style="left:624px;top:256px;background:#2a78c4"></i><i style="left:640px;top:256px;background:#2977c3"></i><i style="left:656px;top:256px;background:#2977c3"></i><i style="left:-16px;top:272px;background:#368fdb"></i><i style="left:0px;top:272px;background:#358fdb"></i><i style="left:16px;top:272px;background:#358fdb"></i><i style="left:32px;top:272px;background:#348edb"></i><i style="left:48px;top:272px;background:#358edb"></i><i style="left:64px;top:272px;background:#358fdb"></i><i style="left:80px;top:272px;background:#368fdb"></i><i style="left:96px;top:272px;background:#378fdb"></i><i style="left:112px;top:272px;background:#388fdb"></i><i style="left:128px;top:272px;background:#388fdb"></i><i style="left:144px;top:272px;background:#388fda"></i><i style="left:160px;top:272px;background:#388ed9"></i><i style="left:176px;top:272px;background:#378ed8"></i><i style="left:192px;top:272px;background:#378dd7"></i><i style="left:208px;top:272px;background:#368cd6"></i><i style="left:224px;top:272px;background:#368bd5"></i><i style="left:240px;top:272px;background:#368bd4"></i><i style="left:256px;top:272px;background:#358ad2"></i><i style="left:272px;top:272px;background:#3589d1"></i><i style="left:288px;top:272px;background:#3488d0"></i><i style="left:304px;top:272px;background:#3487cf"></i><i style="left:320px;top:272px;background:#3387cf"></i><i style="left:336px;top:272px;background:#3286ce"></i><i style="left:352px;top:272px;background:#3285ce"></i><i style="left:368px;top:272px;background:#3184ce"></i><i style="left:384px;top:272px;background:#3083cd"></i><i style="left:400px;top:272px;background:#3082cd"></i><i style="left:416px;top:272px;background:#2f82cd"></i><i style="left:432px;top:272px;background:#2f81cc"></i><i style="left:448px;top:272px;background:#2e80cc"></i><i style="left:464px;top:272px;background:#2d7fcb"></i><i style="left:480px;top:272px;background:#2d7ecb"></i><i style="left:496px;top:272px;background:#2d7dca"></i><i style="left:512px;top:272px;background:#2c7dc9"></i><i style="left:528px;top:272px;background:#2c7cc8"></i><i style="left:544px;top:272px;background:#2c7bc7"></i><i style="left:560px;top:272px;background:#2b7ac6"></i><i style="left:576px;top:272px;background:#2b7ac6"></i><i style="left:592px;top:272px;background:#2b79c5"></i><i style="left:608px;top:272px;background:#2a79c5"></i><i style="left:624px;top:272px;background:#2a78c4"></i><i style="left:640px;top:272px;background:#2977c3"></i><i style="left:656px;top:272px;background:#2977c3"></i></div>

 <div class="a" style="left:0;top:0;width:646px;height:26px;background:linear-gradient(80deg,rgba(255,255,255,0) 330px,rgba(255,255,255,0.16) 350px,rgba(255,255,255,0) 372px,rgba(0,40,100,0) 395px,rgba(0,40,100,0.12) 415px,rgba(0,40,100,0) 435px,rgba(255,255,255,0.12) 455px,rgba(255,255,255,0) 475px)"></div>
 <div id="winin" class="a"></div>
 <div id="title" class="t">Control Panel [All notes]</div>
</div>
<!-- caption buttons -->
<div class="a" style="left:680px;top:37px;width:93px;height:18px;background:#1a3050;border-radius:0 0 5px 5px;overflow:hidden">
 <div class="a" style="left:1px;top:1px;width:24px;height:16px;border-radius:0 0 0 4px;border:1px solid rgba(255,255,255,0.55);background:linear-gradient(#a8cdf0,#8cbbe8 42%,#3e7ec4 46%,#3a7cc2 70%,#5aa0dc)"></div>
 <div class="a" style="left:26px;top:1px;width:24px;height:16px;border:1px solid rgba(255,255,255,0.55);background:linear-gradient(#a8cdf0,#8cbbe8 42%,#3e7ec4 46%,#3a7cc2 70%,#5aa0dc)"></div>
 <div class="a" style="left:51px;top:1px;width:41px;height:16px;border-radius:0 0 4px 0;border:1px solid rgba(255,255,255,0.45);background:linear-gradient(#d8a8a0,#c8887c 42%,#b83c2a 46%,#a82e1e 72%,#c86048)"></div>
 <div class="a" style="left:7px;top:9px;width:12px;height:5px;background:#f4f4f4;border:1px solid #4a3030;border-radius:1px"></div>
 <div class="a" style="left:32px;top:4px;width:12px;height:10px;border:1px solid #2a3a50;border-radius:1px;background:#f4f4f4"><div class="a" style="left:2px;top:2px;width:6px;height:4px;background:#4a88c8;border:1px solid #2a3a50"></div></div>
 <svg style="left:66px;top:4px" width="11" height="10" viewBox="0 0 11 10"><path d="M2 1.5L9 8.5M9 1.5L2 8.5" stroke="#2a2a38" stroke-width="4.4" stroke-linecap="round"/><path d="M2 1.5L9 8.5M9 1.5L2 8.5" stroke="#f6f6f6" stroke-width="2.6" stroke-linecap="round"/></svg>
</div>

<div id="client" class="a"></div>
<!-- main toolbar -->
<div class="a" style="left:140px;top:65px;width:632px;height:26px;background:#f0f0f0"></div>
<div class="sep" style="left:142px;top:67px"></div><div class="sep" style="left:219px;top:67px"></div><div class="sep" style="left:334px;top:67px"></div><div class="sep" style="left:365px;top:67px"></div><div class="sep" style="left:411px;top:67px"></div><div class="sep" style="left:457px;top:67px"></div><div class="sep" style="left:488px;top:67px"></div><div class="sep" style="left:519px;top:67px"></div><div class="sep" style="left:596px;top:67px"></div><div class="sep" style="left:642px;top:67px"></div><div class="sep" style="left:673px;top:67px"></div><div class="sep" style="left:727px;top:67px"></div><div class="sep" style="left:234px;top:95px;height:18px"></div>
<div class="a" style="left:140px;top:91px;width:223px;height:1px;background:#a0a0a0"></div>


<!-- tree view -->
<div class="a" style="left:140px;top:117px;width:223px;height:155px;background:#fff;border:1px solid #a0a0a0;border-right-color:#828282"></div>
<div class="a" style="left:183px;top:119px;width:62px;height:16px;background:#e9e9e9"></div>
<div class="t ui" style="left:185px;top:120px">All notes (2)</div>
<div class="t ui" style="left:204px;top:136px">General (2)</div>
<div class="t ui" style="left:184px;top:152px">Recycle Bin (1)</div>

<!-- list view -->
<div class="a" style="left:367px;top:91px;width:405px;height:181px;background:#f0f0f0;border:1px solid #8a9098;border-right:none;box-shadow:inset 1px 1px 0 #fff"></div>
<div class="a" style="left:369px;top:93px;width:403px;height:23px;background:linear-gradient(#f8fafd,#eef3f9);border-left:1px solid #dce5ee;border-top:1px solid #e6ecf3"></div>
<div class="a" style="left:369px;top:115px;width:403px;height:1px;background:#d8e2ec"></div>
<div class="hdrsep" style="left:518px"></div>
<div class="hdrsep" style="left:551px"></div>
<div class="hdrsep" style="left:583px"></div>
<div class="hdrsep" style="left:615px"></div>
<div class="hdrsep" style="left:681px"></div>
<div class="t ui" style="left:375px;top:98px">Note Name</div>
<div class="t ui" style="left:621px;top:98px">Group</div>
<div class="t ui" style="left:687px;top:98px">Last Saved</div>
<div class="t ui" style="left:391px;top:119px">01 Sep 2009  15:02.877</div>
<div class="t ui" style="left:390px;top:136px">DefaultNote</div>
<div class="t ui" style="left:621px;top:119px">General</div>
<div class="t ui" style="left:621px;top:136px">General</div>
<div class="a" style="left:687px;top:136px;width:84px;height:15px;overflow:hidden"><div class="t ui" style="left:0;top:0">02 Nov 2008  21:</div></div>

<!-- scrollbar -->
<div class="a" style="left:368px;top:254px;width:404px;height:16px;background:#ececec"></div>
<div class="a" style="left:387px;top:254px;width:230px;height:16px;border:1px solid #979797;border-radius:2px;background:linear-gradient(#f4f4f4,#e6e6e6 50%,#d8d8d8)"></div>
<div class="a" style="left:499px;top:258px;width:7px;height:7px;border-left:1px solid #555;border-right:1px solid #555"><div class="a" style="left:2px;top:0;width:1px;height:7px;background:#555"></div></div>
<svg style="left:374px;top:258px" width="5" height="8"><path d="M4.5 0 L0.5 4 L4.5 8Z" fill="#404040"/></svg>
<svg style="left:759px;top:258px" width="5" height="8"><path d="M0.5 0 L4.5 4 L0.5 8Z" fill="#404040"/></svg>

<!-- status bar -->
<div class="a" style="left:140px;top:271px;width:632px;height:1px;background:#a0a0a0"></div>
<div class="a" style="left:140px;top:272px;width:632px;height:23px;background:#f0ecea"></div>
<div class="a" style="left:440px;top:274px;width:1px;height:20px;background:#d5d0cc"></div>
<div class="a" style="left:620px;top:274px;width:1px;height:20px;background:#d5d0cc"></div>
<div class="t ui" style="left:141px;top:278px">Group: All notes (drag-and-drop is impossible)</div>
<div class="t ui" style="left:445px;top:278px">Notes in group: 2</div>
<div class="t ui" style="left:625px;top:278px">Total notes: 3</div>
<svg style="left:760px;top:283px" width="12" height="11" viewBox="0 0 12 11"><rect x="8" y="2" width="1" height="1" fill="#fff"/><rect x="9" y="3" width="1.5" height="1.5" fill="#8a8a8a"/><rect x="5" y="5" width="1" height="1" fill="#fff"/><rect x="6" y="6" width="1.5" height="1.5" fill="#8a8a8a"/><rect x="8" y="5" width="1" height="1" fill="#fff"/><rect x="9" y="6" width="1.5" height="1.5" fill="#8a8a8a"/><rect x="2" y="8" width="1" height="1" fill="#fff"/><rect x="3" y="9" width="1.5" height="1.5" fill="#8a8a8a"/><rect x="5" y="8" width="1" height="1" fill="#fff"/><rect x="6" y="9" width="1.5" height="1.5" fill="#8a8a8a"/><rect x="8" y="8" width="1" height="1" fill="#fff"/><rect x="9" y="9" width="1.5" height="1.5" fill="#8a8a8a"/></svg>
<div class="a" style="left:771px;top:272px;width:1px;height:23px;background:#fff"></div><div class="a" style="left:140px;top:294px;width:632px;height:1px;background:#fafafa"></div>

<!-- ============ NOTE 1 ============ -->
<div class="note" style="left:237px;top:320px;width:200px;height:219px">
 <div class="ncap"></div>
 <svg style="left:173px;top:7px" width="12" height="6" viewBox="0 0 12 6"><path d="M0 0H12L6 6Z" fill="#000"/></svg><svg style="left:186px;top:3px" width="10" height="10" viewBox="0 0 10 10"><path d="M1 1L9 9M9 1L1 9" stroke="#000" stroke-width="2.2" stroke-linecap="round"/></svg>
 <div class="t bold" style="left:1px;top:1px;font-weight:bold;letter-spacing:0.15px">DefaultNote</div>
 <div class="t" style="left:1px;top:19px">With PNotes Portable, you can keep
your notes with you.  Quick notes
about appointments, numbers,
directions and other information is
close at hand.

You can access the PNotes menu to
create new notes or exit the app by
right-clicking the yellow note icon in
your system tray (lower right of your
screen).  Enjoy!</div>
 <div class="nline" style="left:16px;top:201px;width:165px"></div>
 <svg style="left:184px;top:203px;overflow:hidden" width="15" height="15" viewBox="0 0 15 15"><path d="M15 0V15H0Z" fill="#f6dc50"/><path d="M15 0L0 15" stroke="#fff" stroke-width="1.1"/><path d="M16 1L1 16" stroke="#9a9a9a" stroke-width="1.7"/><path d="M15 5L5 15" stroke="#fff" stroke-width="1.1"/><path d="M16 6L6 16" stroke="#9a9a9a" stroke-width="1.7"/><path d="M15 10L10 15" stroke="#fff" stroke-width="1.1"/><path d="M16 11L11 16" stroke="#9a9a9a" stroke-width="1.7"/></svg>
</div>

<!-- ============ NOTE 2 ============ -->
<div class="note" style="left:506px;top:336px;width:220px;height:205px">
 <div class="ncap"></div>
 <svg style="left:193px;top:7px" width="12" height="6" viewBox="0 0 12 6"><path d="M0 0H12L6 6Z" fill="#000"/></svg><svg style="left:206px;top:3px" width="10" height="10" viewBox="0 0 10 10"><path d="M1 1L9 9M9 1L1 9" stroke="#000" stroke-width="2.2" stroke-linecap="round"/></svg>
 <div class="t bold" style="left:0px;top:1px;font-weight:bold;letter-spacing:0.12px">01 Sep 2009  15:02.877</div>
 <div class="t" style="left:0px;top:19px">Don't forget:

1. Call John
2. Go to the gym
3. Visit PortableApps.com...
     <span style="display:inline-block;width:2px"></span>... I hear it's <b>awesome</b>!</div>
 <div class="nline" style="left:16px;top:187px;width:185px"></div>
 <svg style="left:0px;top:188px" width="14" height="14" viewBox="0 0 14 14"><path d="M1.5 1L8 7.5" stroke="#000" stroke-width="1"/><rect x="5.6" y="2.6" width="7.2" height="10" fill="none" stroke="#000" stroke-width="1.3"/></svg>
 <svg style="left:204px;top:189px;overflow:hidden" width="15" height="15" viewBox="0 0 15 15"><path d="M15 0V15H0Z" fill="#f6dc50"/><path d="M15 0L0 15" stroke="#fff" stroke-width="1.1"/><path d="M16 1L1 16" stroke="#9a9a9a" stroke-width="1.7"/><path d="M15 5L5 15" stroke="#fff" stroke-width="1.1"/><path d="M16 6L6 16" stroke="#9a9a9a" stroke-width="1.7"/><path d="M15 10L10 15" stroke="#fff" stroke-width="1.1"/><path d="M16 11L11 16" stroke="#9a9a9a" stroke-width="1.7"/></svg>
</div>

<!-- ============ TASKBAR ============ -->
<div id="task" class="a"></div>
<div class="t" style="left:734px;top:574px;color:#fff;-webkit-text-stroke:0.1px #fff">3:04 PM</div>
<svg style="left:659px;top:578px" width="9" height="6" viewBox="0 0 9 6"><path d="M0.5 5.5L4.5 1L8.5 5.5Z" fill="#fff" stroke="#0a2a48" stroke-width="0.6"/></svg>
<svg style="left:702px;top:571px" width="16" height="17" viewBox="0 0 16 17"><path d="M1.5 5.5H4.5L9.5 1.5V15.5L4.5 11.5H1.5Z" fill="#f4f4ff" stroke="#0a1a30" stroke-width="1"/><path d="M2 6H4V11H2Z" fill="#b8c0e8"/><path d="M11.5 6C13 7.5 13 9.5 11.5 11" fill="none" stroke="#90e0a0" stroke-width="1.3"/></svg>
<div class="a" style="left:782px;top:561px;width:1px;height:39px;background:#0c2c48"></div>
<div class="a" style="left:783px;top:561px;width:17px;height:39px;border:1px solid #5a98c8;border-bottom-color:#4a88b8;background:linear-gradient(#4a7aa0,#1a4c78 25%,#164a78 50%,#1a5a90 100%)"></div>
<svg width="0" height="0" style="position:absolute"><defs>
<linearGradient id="gPage" x1="0" y1="0" x2="1" y2="1"><stop offset="0" stop-color="#ffffff"/><stop offset="1" stop-color="#c9d6e6"/></linearGradient>
<linearGradient id="gGray" x1="0" y1="0" x2="1" y2="1"><stop offset="0" stop-color="#f4f4f4"/><stop offset="1" stop-color="#bdbdbd"/></linearGradient>
<linearGradient id="gFold" x1="0" y1="0" x2="0" y2="1"><stop offset="0" stop-color="#fdf4a8"/><stop offset="1" stop-color="#e8c050"/></linearGradient>
<linearGradient id="gNote" x1="0" y1="0" x2="1" y2="1"><stop offset="0" stop-color="#ffe89a"/><stop offset="1" stop-color="#f8c860"/></linearGradient>
<linearGradient id="gGold" x1="0" y1="0" x2="0" y2="1"><stop offset="0" stop-color="#f6dc8a"/><stop offset="1" stop-color="#d8a838"/></linearGradient>
<linearGradient id="gFlop" x1="0" y1="0" x2="1" y2="1"><stop offset="0" stop-color="#b8b8b8"/><stop offset="1" stop-color="#7a7a7a"/></linearGradient>
<linearGradient id="gBlue" x1="0" y1="0" x2="1" y2="1"><stop offset="0" stop-color="#a8b0f0"/><stop offset="1" stop-color="#3848a8"/></linearGradient>
</defs></svg>
<svg style="left:151px;top:68px" width="16" height="16" viewBox="0 0 16 16"><path d="M1.5 1.5H14.5V11L11 14.5H1.5Z" fill="url(#gPage)" stroke="#b8c4d4"/><path d="M14.5 2V11L11 14.5H1.5" fill="none" stroke="#243e74" stroke-width="1.3"/><path d="M11 14V11H14" fill="#f4f6fa" stroke="#8090b0" stroke-width="0.8"/><path d="M11.8 0.9L12.9 3.7L15.9 3.9L13.6 5.8L14.3 8.7L11.8 7.1L9.3 8.7L10.0 5.8L7.7 3.9L10.7 3.7Z" fill="#f8d838" stroke="#d0a010" stroke-width="0.6"/></svg>
<svg style="left:174px;top:68px" width="16" height="16" viewBox="0 0 16 16"><path d="M1.5 1.5H14.5V11L11 14.5H1.5Z" fill="url(#gPage)" stroke="#b8c4d4"/><path d="M14.5 2V11L11 14.5H1.5" fill="none" stroke="#243e74" stroke-width="1.3"/><path d="M11 14V11H14" fill="#f4f6fa" stroke="#8090b0" stroke-width="0.8"/><path d="M9 9C9 5.5 10.5 4 12.5 3.8V1.5L16 4.8L12.5 8V6C11 6 10 7 9 9Z" fill="#3a78e0" stroke="#1a3a98" stroke-width="0.8" stroke-linejoin="round"/></svg>
<svg style="left:197px;top:68px" width="16" height="16" viewBox="0 0 16 16"><path d="M1.5 2.5H11.5V15.5H1.5Z" fill="url(#gGray)" stroke="#9a9a9a"/><path d="M4 1.5H9V4H4Z" fill="#ddd" stroke="#999"/><path d="M3.5 6.5H9M3.5 8.5H9M3.5 10.5H7" stroke="#aaa"/><path d="M7.5 8.5H14.5V15.5H7.5Z" fill="#f6f6f6" stroke="#aaa"/></svg>
<svg style="left:228px;top:68px" width="16" height="16" viewBox="0 0 16 16"><path d="M0.5 0.5H15.5V15.5H1.5L0.5 14.5Z" fill="url(#gFlop)" stroke="#808080"/><path d="M3.5 0.5H12.5V8.5H3.5Z" fill="#f2f2f2" stroke="#9a9a9a"/><path d="M4 11H11V15.5H4Z" fill="#fafafa"/><rect x="4" y="11.5" width="2" height="2" fill="#333"/></svg>
<svg style="left:251px;top:68px" width="16" height="16" viewBox="0 0 16 16"><path d="M0.5 0.5H15.5V15.5H1.5L0.5 14.5Z" fill="url(#gFlop)" stroke="#808080"/><path d="M3.5 0.5H12.5V8.5H3.5Z" fill="#f2f2f2" stroke="#9a9a9a"/><path d="M4 11H11V15.5H4Z" fill="#fafafa"/><rect x="4" y="11.5" width="2" height="2" fill="#333"/><path d="M6 4 C6 2 10 2 10 4 C10 6 8 5.5 8 8" stroke="#bbb" stroke-width="1.6" fill="none"/></svg>
<svg style="left:274px;top:68px" width="16" height="16" viewBox="0 0 16 16"><path d="M5.5 1.5H14L11.5 7H3Z" fill="#f8f8f8" stroke="#9a9a9a"/><path d="M5 3.5H12M4 5.2H11" stroke="#c4c4c4"/><path d="M0.5 6.5H14.5V14.5H0.5Z" fill="url(#gGray)" stroke="#8a8a8a"/><path d="M1 7H14V9H1Z" fill="#b0b0b0"/><rect x="9" y="11" width="1.5" height="1.5" fill="#606060"/></svg>
<svg style="left:297px;top:68px" width="17" height="16" viewBox="0 0 17 16"><path d="M4 5L14 15.5" stroke="#6a6a6a" stroke-width="3.2"/><path d="M4 5L14 15.5" stroke="#e8e8e8" stroke-width="1.3"/><path d="M1 2.5V6.5L3 8.5H6L7.5 7V3.5L6 2V5H3V2Z" fill="url(#gGray)" stroke="#6a6a6a" stroke-width="0.9" stroke-linejoin="round"/><path d="M11 6L2.5 15.5" stroke="#6a6a6a" stroke-width="3.2"/><path d="M11 6L2.5 15.5" stroke="#e8e8e8" stroke-width="1.3"/><g transform="rotate(38 11.5 4.5)"><rect x="6.5" y="2.5" width="10" height="4" rx="0.8" fill="url(#gGray)" stroke="#6a6a6a" stroke-width="0.9"/></g></svg>
<svg style="left:321px;top:74px" width="7" height="4" viewBox="0 0 7 4"><path d="M0 0H7L3.5 4Z" fill="#4a4a4a"/></svg>
<svg style="left:343px;top:68px" width="16" height="16" viewBox="0 0 16 16"><g transform="translate(0,0)"><path d="M0.5 0.5H9.5V9.5H0.5Z" fill="url(#gBlue)" stroke="#3a40a0" stroke-width="0.9"/><rect x="2.5" y="1" width="6" height="2.5" fill="#f4f4ff"/></g><g transform="translate(3,3)"><path d="M0.5 0.5H9.5V9.5H0.5Z" fill="url(#gBlue)" stroke="#3a40a0" stroke-width="0.9"/><rect x="2.5" y="1" width="6" height="2.5" fill="#f4f4ff"/></g><g transform="translate(6,6)"><path d="M0.5 0.5H9.5V9.5H0.5Z" fill="url(#gBlue)" stroke="#3a40a0" stroke-width="0.9"/><rect x="2.5" y="1" width="6" height="2.5" fill="#f4f4ff"/></g></svg>
<svg style="left:375px;top:68px" width="16" height="16" viewBox="0 0 16 16"><rect x="0.5" y="0.5" width="15" height="15" fill="#fafafa" stroke="#202020"/><rect x="4.5" y="4.5" width="7" height="7" fill="url(#gGold)" stroke="#6a5020"/><path d="M2.5 6V10M13.5 6V10M6 2.5H10M6 13.5H10" stroke="#303030"/></svg>
<svg style="left:398px;top:74px" width="7" height="4" viewBox="0 0 7 4"><path d="M0 0H7L3.5 4Z" fill="#4a4a4a"/></svg>
<svg style="left:421px;top:68px" width="16" height="16" viewBox="0 0 16 16"><rect x="0.5" y="0.5" width="5" height="5" fill="url(#gGray)" stroke="#6a7a90"/><rect x="0.5" y="10.5" width="5" height="5" fill="url(#gGray)" stroke="#6a7a90"/><rect x="10.5" y="0.5" width="5" height="5" fill="url(#gGray)" stroke="#6a7a90"/><rect x="10.5" y="10.5" width="5" height="5" fill="url(#gGray)" stroke="#6a7a90"/><rect x="4.5" y="4.5" width="7" height="7" fill="url(#gGold)" stroke="#8a6820"/></svg>
<svg style="left:444px;top:74px" width="7" height="4" viewBox="0 0 7 4"><path d="M0 0H7L3.5 4Z" fill="#4a4a4a"/></svg>
<svg style="left:466px;top:70px" width="14" height="14" viewBox="0 0 14 14"><rect x="2.5" y="2.5" width="9" height="9" fill="url(#gGray)" stroke="#404040"/><rect x="1.5" y="1.5" width="2" height="2" fill="#fff" stroke="#303030"/><rect x="1.5" y="10.5" width="2" height="2" fill="#fff" stroke="#303030"/><rect x="10.5" y="1.5" width="2" height="2" fill="#fff" stroke="#303030"/><rect x="10.5" y="10.5" width="2" height="2" fill="#fff" stroke="#303030"/></svg>
<svg style="left:496px;top:68px" width="16" height="16" viewBox="0 0 16 16"><rect x="4.5" y="4.5" width="7" height="7" fill="url(#gGray)" stroke="#404040"/><path d="M1.5 4V12M14.5 4V12M4 1.5H12M4 14.5H12" stroke="#606060"/><path d="M0 5L1.5 3L3 5M0 11L1.5 13L3 11M13 5L14.5 3L16 5M13 11L14.5 13L16 11M5 0L3 1.5L5 3M11 0L13 1.5L11 3M5 13L3 14.5L5 16M11 13L13 14.5L11 16" stroke="#606060" fill="none" stroke-width="0.8"/></svg>
<svg style="left:528px;top:69px" width="16" height="15" viewBox="0 0 16 15"><path d="M1.5 1.5H14.5V11L11 14.5H1.5Z" fill="url(#gGray)" stroke="#a0a0a0"/><path d="M10 2L14 6M14 2L10 6" stroke="#8a8a8a" stroke-width="1.5"/></svg>
<svg style="left:551px;top:69px" width="16" height="15" viewBox="0 0 16 15"><path d="M0.5 6.5L8 1.5L15.5 6.5V14.5H0.5Z" fill="url(#gGray)" stroke="#9a9a9a"/><path d="M0.5 6.5L8 11L15.5 6.5" fill="none" stroke="#9a9a9a"/><path d="M4 6H12M5 8H11" stroke="#b0b0b0"/></svg>
<svg style="left:574px;top:68px" width="16" height="16" viewBox="0 0 16 16"><path d="M5.5 3.5H15.5V15.5H5.5Z" fill="url(#gGray)" stroke="#9a9a9a"/><path d="M3 12V3C3 0.5 7 0.5 7 3V11C7 12.5 5 12.5 5 11V4" fill="none" stroke="#7a7a7a" stroke-width="1.2"/><path d="M1.5 5.5H4V14.5H9" fill="none" stroke="#9a9a9a"/></svg>
<svg style="left:606px;top:68px" width="16" height="16" viewBox="0 0 16 16"><path d="M1.5 15L6 10.5" stroke="#404040" stroke-width="1.6"/><path d="M3.5 9.5L7 6L10.5 9.5L7 13Z" fill="#909090" stroke="#505050" stroke-width="0.8"/><path d="M6 7L9.5 3.5L13 7L9.5 10.5Z" fill="#808080"/><circle cx="12" cy="4.5" r="3.6" fill="#a0a0a0" stroke="#505050" stroke-width="0.8"/><circle cx="11" cy="3.5" r="1.3" fill="#e8e8e8"/><circle cx="7" cy="9.5" r="2.6" fill="#a8a8a8" stroke="#505050" stroke-width="0.8"/></svg>
<svg style="left:630px;top:74px" width="7" height="4" viewBox="0 0 7 4"><path d="M0 0H7L3.5 4Z" fill="#4a4a4a"/></svg>
<svg style="left:650px;top:68px" width="16" height="16" viewBox="0 0 16 16"><path d="M7.0 1.5L8.9 5.9L13.7 6.3L10.0 9.5L11.1 14.2L7.0 11.7L2.9 14.2L4.0 9.5L0.3 6.3L5.1 5.9Z" fill="url(#gGray)" stroke="#8a8a8a" stroke-linejoin="round"/><rect x="9.5" y="0.5" width="6" height="6" fill="#f0f0f0"/><path d="M12.5 0.5V6.5M9.5 3.5H15.5" stroke="#8a8a8a" stroke-width="2"/></svg>
<svg style="left:682px;top:68px" width="16" height="16" viewBox="0 0 16 16"><path d="M4.5 1.5H11.5L13.5 9.5H2.5Z" fill="url(#gGray)" stroke="#a0a0a0"/><path d="M1.5 9.5H14.5L13 14.5H3Z" fill="#e0e0e0" stroke="#a0a0a0"/><path d="M6 5C6 3.8 8 3.8 8 5C8 3.8 10 3.8 10 5C10 6.2 8 7.5 8 7.5C8 7.5 6 6.2 6 5Z" fill="none" stroke="#a8a8a8" stroke-width="1"/></svg>
<svg style="left:705px;top:68px" width="16" height="16" viewBox="0 0 16 16"><path d="M4.5 1.5H11.5L13.5 9.5H2.5Z" fill="url(#gGray)" stroke="#a0a0a0"/><path d="M1.5 9.5H14.5L13 14.5H3Z" fill="#e0e0e0" stroke="#a0a0a0"/><path d="M6 5C6 3.8 8 3.8 8 5C8 3.8 10 3.8 10 5C10 6.2 8 7.5 8 7.5C8 7.5 6 6.2 6 5Z" fill="none" stroke="#a8a8a8" stroke-width="1"/><path d="M8 6H13V3.5L16 7L13 10.5V8H8Z" fill="#c8c8c8" stroke="#909090" stroke-width="0.7"/></svg>
<svg style="left:737px;top:68px" width="16" height="16" viewBox="0 0 16 16"><path d="M1.5 0.5H10.5L13.5 3.5V15.5H1.5Z" fill="url(#gPage)" stroke="#5a7aa8"/><circle cx="7" cy="8" r="3.5" fill="#d8eeff" stroke="#3a6aa0" stroke-width="1.2"/><path d="M9.5 10.5L13.5 14.5" stroke="#d07820" stroke-width="2"/></svg>
<div class="a" style="left:760px;top:68px;width:12px;height:16px;overflow:hidden"><svg style="left:0px;top:0px" width="16" height="16" viewBox="0 0 16 16"><rect x="0.5" y="1.5" width="15" height="13" fill="#f8d860" stroke="#8090a0"/><rect x="1" y="2" width="14" height="3" fill="#2a60c0"/><rect x="1" y="6" width="14" height="1" fill="#2a60c0"/></svg></div>
<svg style="left:144px;top:96px" width="16" height="16" viewBox="0 0 16 16"><path d="M0.5 3.5H5L6.5 5H12.5V14.5H0.5Z" fill="url(#gFold)" stroke="#a08030"/><path d="M0.5 14.5H12.5" stroke="#806010"/><path d="M11 0.5V8.5M7 4.5H15" stroke="#0a6a0a" stroke-width="3.4"/><path d="M11 1.5V7.5M8 4.5H14" stroke="#30c030" stroke-width="1.6"/></svg>
<svg style="left:167px;top:96px" width="16" height="16" viewBox="0 0 16 16"><path d="M3.5 1.5H7L8 2.5H12.5V9" fill="none" stroke="#a8a8a8"/><path d="M0.5 5.5H4L5.5 7H11.5V15.5H0.5Z" fill="url(#gGray)" stroke="#a0a0a0"/><path d="M0.5 9.5H11.5" stroke="#b8b8b8"/><path d="M12 0.5V8M8.5 4.5H15.5" stroke="#a0a0a0" stroke-width="2"/></svg>
<svg style="left:190px;top:96px" width="16" height="16" viewBox="0 0 16 16"><path d="M0.5 3.5H5L6.5 5H14.5V14.5H0.5Z" fill="url(#gGray)" stroke="#a8a8a8"/><path d="M5 12L14 2" stroke="#808080" stroke-width="2.4"/><path d="M5 12L14 2" stroke="#e8e8e8" stroke-width="1"/></svg>
<svg style="left:213px;top:96px" width="16" height="16" viewBox="0 0 16 16"><path d="M0.5 3.5H5L6.5 5H13.5V14.5H0.5Z" fill="url(#gGray)" stroke="#a8a8a8"/><path d="M8 8L15 15M15 8L8 15" stroke="#707070" stroke-width="1.4"/></svg>
<svg style="left:244px;top:96px" width="16" height="16" viewBox="0 0 16 16"><rect x="4.5" y="0.5" width="11" height="3" fill="#dcdcdc" stroke="#909090"/><rect x="0.5" y="3.5" width="15" height="12" fill="url(#gGray)" stroke="#909090"/><rect x="1" y="4" width="14" height="2" fill="#c4c4c4"/><path d="M14.5 4V15" stroke="#a8a8a8"/></svg>
<svg style="left:267px;top:96px" width="16" height="16" viewBox="0 0 16 16"><rect x="4.5" y="0.5" width="11" height="3" fill="#dcdcdc" stroke="#909090"/><rect x="0.5" y="3.5" width="4" height="12" fill="#f4f4f4" stroke="#909090"/><rect x="4.5" y="3.5" width="11" height="12" fill="#fafafa" stroke="#909090"/><rect x="5" y="4" width="10" height="2" fill="#c8c8c8"/></svg>
<svg style="left:527px;top:98px" width="14" height="13" viewBox="0 0 14 13"><path d="M1 11L8 2" stroke="#101010" stroke-width="1.4"/><path d="M7 3L12 6.5L9.5 10.5L5 8Z" fill="#e01030" stroke="#a00010" stroke-width="0.6"/></svg>
<svg style="left:559px;top:99px" width="14" height="10" viewBox="0 0 14 10"><path d="M1.5 5L5 8.5L13 1" stroke="#18a018" stroke-width="2.2" fill="none"/></svg>
<svg style="left:590px;top:97px" width="15" height="15" viewBox="0 0 15 15"><path d="M3.5 7V4.5C3.5 1.5 11.5 1.5 11.5 4.5V7" fill="none" stroke="#b08020" stroke-width="2"/><rect x="1.5" y="6.5" width="12" height="8" fill="url(#gGold)" stroke="#a07010"/><path d="M7.5 9L6 11H9Z M7 11H8V13H7Z" fill="#3a2a10"/></svg>
<svg style="left:374px;top:118px" width="15" height="14" viewBox="0 0 15 14"><path d="M0.5 0.5H13.5V9.5L9.5 13.5H0.5Z" fill="url(#gNote)" stroke="#f0a060"/><path d="M13.5 9.5L9.5 13.5H0.5" fill="none" stroke="#5a3a60"/><path d="M9.5 13.5V9.5H13.5" fill="#fff4c0" stroke="#c08050" stroke-width="0.7"/><path d="M6 10L13 2" stroke="#705020" stroke-width="3"/><path d="M6 10L13 2" stroke="#f0d060" stroke-width="1.6"/><path d="M11.5 0.5L14.5 3.5" stroke="#ff1010" stroke-width="2.4"/><path d="M5 11L6.5 9" stroke="#202020" stroke-width="1.4"/></svg>
<svg style="left:374px;top:135px" width="14" height="14" viewBox="0 0 14 14"><path d="M0.5 0.5H13.5V9.5L9.5 13.5H0.5Z" fill="url(#gNote)" stroke="#f0a060"/><path d="M13.5 9.5L9.5 13.5H0.5" fill="none" stroke="#5a3a60"/><path d="M9.5 13.5V9.5H13.5" fill="#fff4c0" stroke="#c08050" stroke-width="0.7"/></svg>
<svg style="left:149px;top:123px" width="9" height="9" viewBox="0 0 9 9"><rect x="0.5" y="0.5" width="8" height="8" rx="1" fill="url(#gGray)" stroke="#8a8a8a"/><path d="M2 4.5H7" stroke="#3050a0"/></svg>
<svg style="left:140px;top:118px" width="60" height="50" viewBox="0 0 60 50"><rect x="19" y="9" width="1" height="1" fill="#7a7a7a"/><rect x="21" y="9" width="1" height="1" fill="#7a7a7a"/><rect x="23" y="9" width="1" height="1" fill="#7a7a7a"/><rect x="13" y="15" width="1" height="1" fill="#7a7a7a"/><rect x="13" y="17" width="1" height="1" fill="#7a7a7a"/><rect x="13" y="19" width="1" height="1" fill="#7a7a7a"/><rect x="13" y="21" width="1" height="1" fill="#7a7a7a"/><rect x="13" y="23" width="1" height="1" fill="#7a7a7a"/><rect x="13" y="25" width="1" height="1" fill="#7a7a7a"/><rect x="13" y="27" width="1" height="1" fill="#7a7a7a"/><rect x="13" y="29" width="1" height="1" fill="#7a7a7a"/><rect x="13" y="31" width="1" height="1" fill="#7a7a7a"/><rect x="13" y="33" width="1" height="1" fill="#7a7a7a"/><rect x="13" y="35" width="1" height="1" fill="#7a7a7a"/><rect x="13" y="37" width="1" height="1" fill="#7a7a7a"/><rect x="13" y="39" width="1" height="1" fill="#7a7a7a"/><rect x="13" y="41" width="1" height="1" fill="#7a7a7a"/><rect x="15" y="41" width="1" height="1" fill="#7a7a7a"/><rect x="17" y="41" width="1" height="1" fill="#7a7a7a"/><rect x="19" y="41" width="1" height="1" fill="#7a7a7a"/><rect x="21" y="41" width="1" height="1" fill="#7a7a7a"/><rect x="23" y="41" width="1" height="1" fill="#7a7a7a"/><rect x="32" y="17" width="1" height="1" fill="#7a7a7a"/><rect x="32" y="19" width="1" height="1" fill="#7a7a7a"/><rect x="32" y="21" width="1" height="1" fill="#7a7a7a"/><rect x="32" y="23" width="1" height="1" fill="#7a7a7a"/><rect x="32" y="25" width="1" height="1" fill="#7a7a7a"/><rect x="34" y="25" width="1" height="1" fill="#7a7a7a"/><rect x="36" y="25" width="1" height="1" fill="#7a7a7a"/><rect x="38" y="25" width="1" height="1" fill="#7a7a7a"/><rect x="40" y="25" width="1" height="1" fill="#7a7a7a"/><rect x="42" y="25" width="1" height="1" fill="#7a7a7a"/></svg>
<svg style="left:164px;top:122px" width="17" height="14" viewBox="0 0 17 14"><g transform="translate(0,0)"><path d="M0.5 0.5H4L5 1.5H9.5V6.5H0.5Z" fill="url(#gFold)" stroke="#9a7a30"/></g><g transform="translate(3,3)"><path d="M0.5 0.5H4L5 1.5H9.5V6.5H0.5Z" fill="url(#gFold)" stroke="#9a7a30"/></g><g transform="translate(6,6)"><path d="M0.5 0.5H4L5 1.5H9.5V6.5H0.5Z" fill="url(#gFold)" stroke="#9a7a30"/></g></svg>
<svg style="left:184px;top:138px" width="14" height="12" viewBox="0 0 14 12"><path d="M0.5 0.5H5L6.5 2H13.5V11.5H0.5Z" fill="url(#gFold)" stroke="#a88020"/><path d="M0.5 11.5H13.5" stroke="#906010"/></svg>
<svg style="left:164px;top:151px" width="16" height="16" viewBox="0 0 16 16"><path d="M1.5 3.5H14.5L12.5 15.5H3.5Z" fill="#e4ecf4" stroke="#3a4a60"/><path d="M2 1.5H14L15 4.5H1Z" fill="#c8d4e0" stroke="#3a4a60"/><circle cx="8" cy="9.5" r="3" fill="none" stroke="#20a030" stroke-width="1.6"/></svg>
<svg style="left:138px;top:40px" width="18" height="18" viewBox="0 0 18 18"><path d="M3.2 6.2L12.8 4.3L16.8 13.3L7.3 17.7Z" fill="#fff8d0" stroke="#f0c030" stroke-width="1.1" stroke-linejoin="round"/>
<path d="M5.8 10L13.8 8M6.8 12L14.8 10M7.8 14L15.5 12" stroke="#d8b860" stroke-width="0.9"/>
<ellipse cx="8.4" cy="8" rx="2.5" ry="2.2" fill="#d82810"/><ellipse cx="10.8" cy="6.2" rx="2.2" ry="2" fill="#c01808"/><ellipse cx="7.8" cy="7.4" rx="0.9" ry="0.7" fill="#ff9070"/></svg>
<svg style="left:673px;top:570px" width="18" height="18" viewBox="0 0 18 18"><path d="M3.2 6.2L12.8 4.3L16.8 13.3L7.3 17.7Z" fill="#fff8d0" stroke="#f0c030" stroke-width="1.1" stroke-linejoin="round"/>
<path d="M5.8 10L13.8 8M6.8 12L14.8 10M7.8 14L15.5 12" stroke="#d8b860" stroke-width="0.9"/>
<ellipse cx="8.4" cy="8" rx="2.5" ry="2.2" fill="#d82810"/><ellipse cx="10.8" cy="6.2" rx="2.2" ry="2" fill="#c01808"/><ellipse cx="7.8" cy="7.4" rx="0.9" ry="0.7" fill="#ff9070"/></svg>

</body></html>
